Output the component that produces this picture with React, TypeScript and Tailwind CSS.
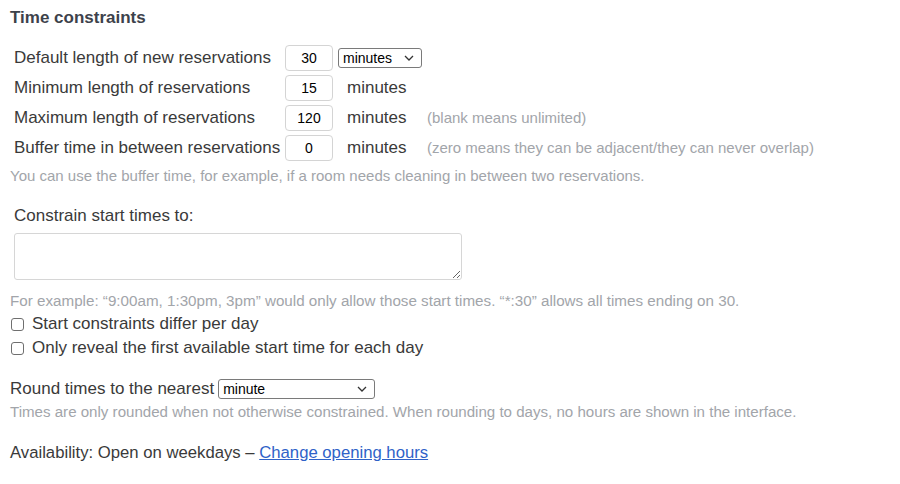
import { useState } from "react";

type Row = {
  label: string;
  value: string;
  unit: "select" | "text";
  hint?: string;
};

const rows: Row[] = [
  { label: "Default length of new reservations", value: "30", unit: "select" },
  { label: "Minimum length of reservations", value: "15", unit: "text" },
  {
    label: "Maximum length of reservations",
    value: "120",
    unit: "text",
    hint: "(blank means unlimited)",
  },
  {
    label: "Buffer time in between reservations",
    value: "0",
    unit: "text",
    hint: "(zero means they can be adjacent/they can never overlap)",
  },
];

const Chevron = () => (
  <svg
    width="10"
    height="6"
    viewBox="0 0 10 6"
    fill="none"
    stroke="#333"
    strokeWidth="1.3"
    className="pointer-events-none absolute right-[8px] top-1/2 -translate-y-1/2"
  >
    <path d="M1 1l4 4 4-4" />
  </svg>
);

const SelectBox = ({
  value,
  options,
  width,
}: {
  value: string;
  options: string[];
  width: string;
}) => (
  <div className={`relative inline-block ${width}`}>
    <select
      defaultValue={value}
      className="h-[20px] w-full appearance-none rounded-[3px] border border-[#7a7a7a] bg-white pl-[4px] pr-[20px] text-[14px] leading-[18px] text-black"
    >
      {options.map((o) => (
        <option key={o}>{o}</option>
      ))}
    </select>
    <Chevron />
  </div>
);

const CheckRow = ({ label }: { label: string }) => {
  const [checked, setChecked] = useState(false);
  return (
    <label className="flex h-[24px] items-center">
      <input
        type="checkbox"
        checked={checked}
        onChange={(e) => setChecked(e.target.checked)}
        className="ml-[1px] h-[13px] w-[13px] appearance-none rounded-[3px] border border-[#6f6f6f] bg-white"
      />
      <span className="ml-[8px] text-[17px]">{label}</span>
    </label>
  );
};

const App = () => {
  return (
    <div
      className="min-h-[484px] w-[900px] bg-white pl-[10px] text-[#3a3a3a]"
      style={{ fontFamily: '"Liberation Sans", Arial, sans-serif' }}
    >
      <h3 className="pt-[6px] text-[17px] font-bold leading-[24px] text-[#3d424b]">
        Time constraints
      </h3>

      <div className="ml-[4px] mt-[13px] grid grid-cols-[271px_53px_89px_auto] text-[17px]">
        {rows.map((row) => (
          <div key={row.label} className="contents">
            <div className="flex h-[30px] items-center whitespace-nowrap">
              {row.label}
            </div>
            <div className="flex h-[30px] items-center">
              <input
                defaultValue={row.value}
                className="h-[26px] w-[48px] rounded-[4px] border border-[#d4d4d4] bg-white text-center text-[14px] text-black outline-none"
              />
            </div>
            <div className="flex h-[30px] items-center">
              {row.unit === "select" ? (
                <SelectBox
                  value="minutes"
                  options={["minutes", "hours", "days"]}
                  width="w-[84px]"
                />
              ) : (
                <span className="pl-[9px]">minutes</span>
              )}
            </div>
            <div className="flex h-[30px] items-center whitespace-nowrap text-[15px] text-[#a2a5aa]">
              {row.hint}
            </div>
          </div>
        ))}
      </div>

      <p className="mt-[3px] text-[15px] leading-[20px] text-[#a2a5aa]">
        You can use the buffer time, for example, if a room needs cleaning in
        between two reservations.
      </p>

      <div className="ml-[4px] mt-[18px] text-[17px] leading-[24px]">
        Constrain start times to:
      </div>
      <textarea className="ml-[4px] mt-[5px] block h-[47px] w-[448px] rounded-[3px] border border-[#d6d6d6] bg-white outline-none" />

      <p className="mt-[11px] text-[15.2px] leading-[20px] text-[#a2a5aa]">
        For example: “9:00am, 1:30pm, 3pm” would only allow those start times.
        “*:30” allows all times ending on 30.
      </p>

      <div className="mt-[1px]">
        <CheckRow label="Start constraints differ per day" />
        <CheckRow label="Only reveal the first available start time for each day" />
      </div>

      <div className="mt-[17px] flex h-[24px] items-center text-[17px]">
        <span>Round times to the nearest</span>
        <span className="ml-[4px]">
          <SelectBox
            value="minute"
            options={["minute", "5 minutes", "15 minutes", "hour", "day"]}
            width="w-[157px]"
          />
        </span>
      </div>
      <p className="mt-[1px] text-[15.1px] leading-[20px] text-[#a2a5aa]">
        Times are only rounded when not otherwise constrained. When rounding to
        days, no hours are shown in the interface.
      </p>

      <p className="mt-[19px] text-[16.7px] leading-[24px]">
        Availability: Open on weekdays –{" "}
        <a href="#" className="text-[#2f62c8] underline">
          Change opening hours
        </a>
      </p>
    </div>
  );
};

export default App;
